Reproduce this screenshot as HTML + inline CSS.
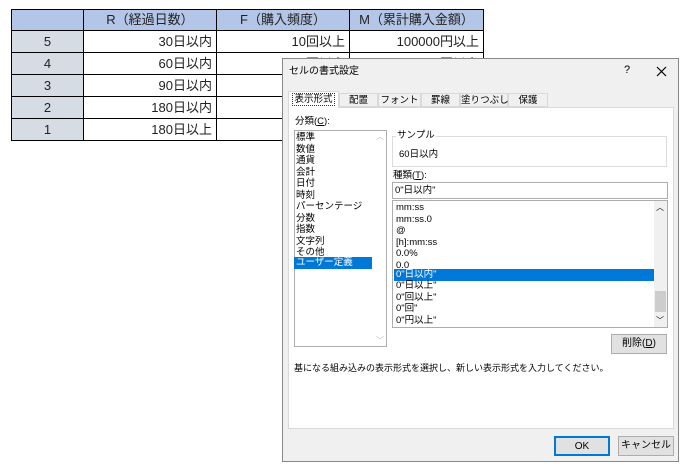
<!DOCTYPE html>
<html><head><meta charset="utf-8"><style>
*{margin:0;padding:0;box-sizing:border-box}
body{width:690px;height:472px;background:#fff;position:relative;overflow:hidden;font-family:"Liberation Sans","Noto Sans CJK JP",sans-serif;font-size:12px;color:#000}
.a{position:absolute}
table{position:absolute;left:11px;top:9px;border-collapse:collapse;font-size:13px;color:#222}
td{border:1px solid #000;height:22px;padding:0 4px;line-height:20px}
.h td{background:#b4c6e7;text-align:center;height:21px}
td.n{background:#d6dce4;text-align:center}
td.r{text-align:right}
.dlg{left:282px;top:58px;width:397px;height:404px;background:#f0f0f0;border:1px solid #888;font-size:9.5px}
.t{font-size:9.5px;line-height:11.5px;white-space:nowrap}
.box{background:#fff;border:1px solid #adadad}
.btn{background:#e1e1e1;border:1px solid #adadad;text-align:center;font-size:10px}
</style></head><body>
<table>
<tr class="h"><td style="width:72px"></td><td style="width:133px">R（経過日数）</td><td style="width:133px">F（購入頻度）</td><td style="width:134px">M（累計購入金額）</td></tr>
<tr><td class="n">5</td><td class="r">30日以内</td><td class="r">10回以上</td><td class="r">100000円以上</td></tr>
<tr><td class="n">4</td><td class="r">60日以内</td><td class="r">5回以上</td><td class="r">50000円以上</td></tr>
<tr><td class="n">3</td><td class="r">90日以内</td><td class="r"></td><td class="r"></td></tr>
<tr><td class="n">2</td><td class="r">180日以内</td><td class="r"></td><td class="r"></td></tr>
<tr><td class="n">1</td><td class="r">180日以上</td><td class="r"></td><td class="r"></td></tr>
</table>
<div class="a dlg">
<div class="a t" style="left:6px;top:7px;font-size:10px">セルの書式設定</div>
<div class="a" style="left:341px;top:5px;font-size:11px">?</div>
<svg class="a" style="left:373px;top:7px" width="11" height="11"><path d="M1 1L10 10M10 1L1 10" stroke="#000" stroke-width="1.2"/></svg>
<div class="a" style="left:5px;top:48px;width:386px;height:322px;background:#fff;border:1px solid #d9d9d9"></div>
<div class="a t" style="left:5px;top:32px;width:51px;height:17px;background:#fff;border:1px solid #d9d9d9;border-bottom:none;text-align:center;line-height:15px"><span style="border:1px dotted #333;padding:0 1px">表示形式</span></div>
<div class="a t" style="left:56px;top:34px;width:39px;height:14px;border:1px solid #d9d9d9;text-align:center;line-height:13px">配置</div>
<div class="a t" style="left:95px;top:34px;width:43px;height:14px;border:1px solid #d9d9d9;text-align:center;line-height:13px">フォント</div>
<div class="a t" style="left:138px;top:34px;width:39px;height:14px;border:1px solid #d9d9d9;text-align:center;line-height:13px">罫線</div>
<div class="a t" style="left:177px;top:34px;width:48px;height:14px;border:1px solid #d9d9d9;text-align:center;line-height:13px">塗りつぶし</div>
<div class="a t" style="left:225px;top:34px;width:40px;height:14px;border:1px solid #d9d9d9;text-align:center;line-height:13px">保護</div>
<div class="a t" style="left:12px;top:57px">分類(<u>C</u>):</div>
<div class="a box" style="left:11px;top:71px;width:93px;height:217px"></div>
<div class="a t" style="left:13px;top:73px">標準<br>数値<br>通貨<br>会計<br>日付<br>時刻<br>パーセンテージ<br>分数<br>指数<br>文字列<br>その他</div>
<div class="a t" style="left:11px;top:198px;width:78px;background:#0078d7;color:#fff;padding-left:2px">ユーザー定義</div>
<div class="a" style="left:93px;top:72px;color:#bbb;font-size:8px">︿</div>
<div class="a" style="left:93px;top:276px;color:#bbb;font-size:8px">﹀</div>
<div class="a" style="left:109px;top:77px;width:275px;height:31px;border:1px solid #dcdcdc"></div>
<div class="a t" style="left:113px;top:71px;background:#fff;padding:0 1px">サンプル</div>
<div class="a t" style="left:116px;top:90px">60日以内</div>
<div class="a t" style="left:110px;top:111px">種類(<u>T</u>):</div>
<div class="a box" style="left:109px;top:123px;width:276px;height:17px"></div>
<div class="a t" style="left:112px;top:126px">0"日以内"</div>
<div class="a box" style="left:109px;top:141px;width:276px;height:128px"></div>
<div class="a t" style="left:113px;top:143px">mm:ss<br>mm:ss.0<br>@<br>[h]:mm:ss<br>0.0%<br>0.0</div>
<div class="a t" style="left:111px;top:210px;width:260px;background:#0078d7;color:#fff;padding-left:2px">0"日以内"</div>
<div class="a t" style="left:113px;top:221px">0"日以上"<br>0"回以上"<br>0"回"<br>0"円以上"</div>
<div class="a" style="left:371px;top:142px;width:13px;height:126px;background:#f0f0f0"></div>
<div class="a" style="left:372px;top:232px;width:11px;height:21px;background:#cdcdcd"></div>
<div class="a" style="left:373px;top:143px;font-size:8px">︿</div>
<div class="a" style="left:373px;top:256px;font-size:8px">﹀</div>
<div class="a btn" style="left:328px;top:275px;width:56px;height:20px;line-height:18px">削除(<u>D</u>)</div>
<div class="a t" style="left:11px;top:304px;font-size:9px">基になる組み込みの表示形式を選択し、新しい表示形式を入力してください。</div>
<div class="a btn" style="left:271px;top:377px;width:56px;height:20px;line-height:17px;border:2px solid #0078d7">OK</div>
<div class="a btn" style="left:335px;top:377px;width:56px;height:20px;line-height:18px">キャンセル</div>
</div>
</body></html>
